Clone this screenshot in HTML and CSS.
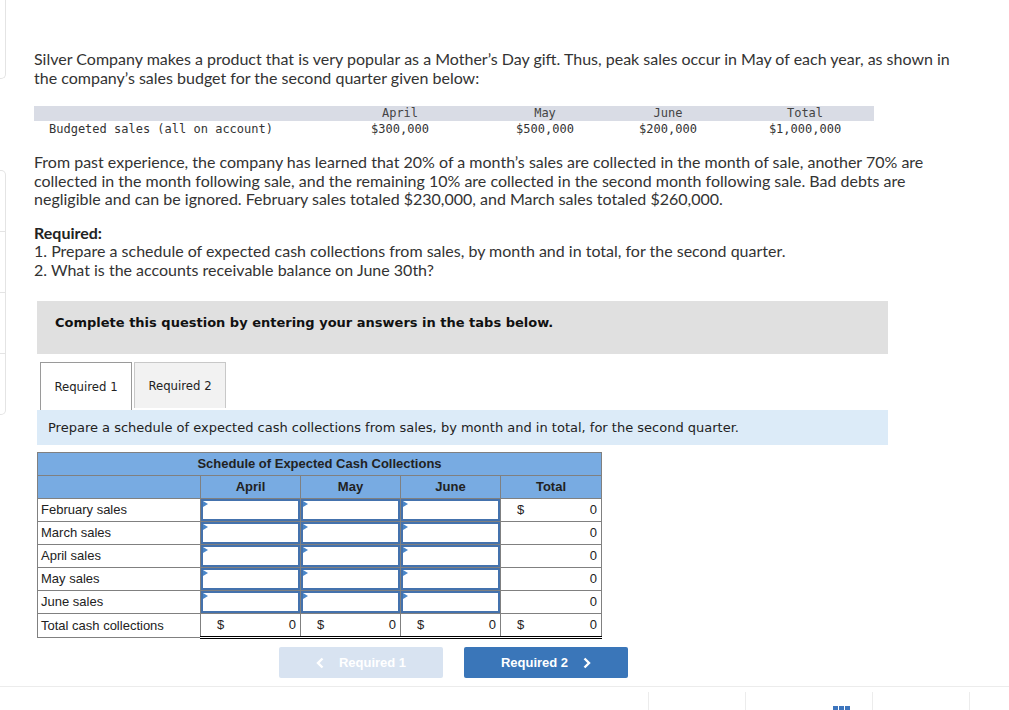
FILE: index.html
```html
<!DOCTYPE html>
<html lang="en">
<head>
<meta charset="utf-8">
<title>Silver Company – Schedule of Expected Cash Collections</title>
<link rel="stylesheet" href="styles.css">
</head>
<body>
<div class="page">
  <aside class="sidebar">
    <div class="sb-top"></div>
    <div class="sb-list">
      <div class="sb-item"></div>
      <div class="sb-item"></div>
      <div class="sb-item"></div>
      <div class="sb-item"></div>
    </div>
  </aside>

  <main class="content">
    <p class="text intro">Silver Company makes a product that is very popular as a Mother’s Day gift. Thus, peak sales occur in May of each year, as shown in the company’s sales budget for the second quarter given below:</p>

    <div class="budget">
      <div class="b-row b-head">
        <div class="b-cell b-label"></div>
        <div class="b-cell">April</div>
        <div class="b-cell">May</div>
        <div class="b-cell">June</div>
        <div class="b-cell b-total">Total</div>
      </div>
      <div class="b-row">
        <div class="b-cell b-label">Budgeted sales (all on account)</div>
        <div class="b-cell">$300,000</div>
        <div class="b-cell">$500,000</div>
        <div class="b-cell">$200,000</div>
        <div class="b-cell b-total">$1,000,000</div>
      </div>
    </div>

    <p class="text past">From past experience, the company has learned that 20% of a month’s sales are collected in the month of sale, another 70% are collected in the month following sale, and the remaining 10% are collected in the second month following sale. Bad debts are negligible and can be ignored. February sales totaled $230,000, and March sales totaled $260,000.</p>

    <div class="text required">
      <strong>Required:</strong><br>
      1. Prepare a schedule of expected cash collections from sales, by month and in total, for the second quarter.<br>
      2. What is the accounts receivable balance on June 30th?
    </div>

    <section class="question">
      <div class="q-banner">Complete this question by entering your answers in the tabs below.</div>

      <div class="tabs">
        <div class="tab active">Required 1</div>
        <div class="tab">Required 2</div>
      </div>

      <div class="instruction">Prepare a schedule of expected cash collections from sales, by month and in total, for the second quarter.</div>

      <table class="schedule">
        <colgroup>
          <col class="c-label"><col class="c-val"><col class="c-val"><col class="c-val"><col class="c-tot">
        </colgroup>
        <thead>
          <tr class="h1"><th colspan="5">Schedule of Expected Cash Collections</th></tr>
          <tr class="h2"><th></th><th>April</th><th>May</th><th>June</th><th>Total</th></tr>
        </thead>
        <tbody>
          <tr>
            <td class="label">February sales</td>
            <td class="in"><div class="box"></div></td>
            <td class="in"><div class="box"></div></td>
            <td class="in"><div class="box"></div></td>
            <td class="num"><span class="cur">$</span><span class="val">0</span></td>
          </tr>
          <tr>
            <td class="label">March sales</td>
            <td class="in"><div class="box"></div></td>
            <td class="in"><div class="box"></div></td>
            <td class="in"><div class="box"></div></td>
            <td class="num"><span class="val">0</span></td>
          </tr>
          <tr>
            <td class="label">April sales</td>
            <td class="in"><div class="box"></div></td>
            <td class="in"><div class="box"></div></td>
            <td class="in"><div class="box"></div></td>
            <td class="num"><span class="val">0</span></td>
          </tr>
          <tr>
            <td class="label">May sales</td>
            <td class="in"><div class="box"></div></td>
            <td class="in"><div class="box"></div></td>
            <td class="in"><div class="box"></div></td>
            <td class="num"><span class="val">0</span></td>
          </tr>
          <tr>
            <td class="label">June sales</td>
            <td class="in"><div class="box"></div></td>
            <td class="in"><div class="box"></div></td>
            <td class="in"><div class="box"></div></td>
            <td class="num"><span class="val">0</span></td>
          </tr>
          <tr class="total">
            <td class="label">Total cash collections</td>
            <td class="num"><span class="cur">$</span><span class="val">0</span></td>
            <td class="num"><span class="cur">$</span><span class="val">0</span></td>
            <td class="num"><span class="cur">$</span><span class="val">0</span></td>
            <td class="num"><span class="cur">$</span><span class="val">0</span></td>
          </tr>
        </tbody>
      </table>

      <div class="nav">
        <button class="btn prev" type="button">
          <svg class="chev" width="8" height="12" viewBox="0 0 8 12" aria-hidden="true"><path d="M6.5 1.5 2 6l4.5 4.5" fill="none" stroke="currentColor" stroke-width="2.4"/></svg>
          <span>Required 1</span>
        </button>
        <button class="btn next" type="button">
          <span>Required 2</span>
          <svg class="chev" width="8" height="12" viewBox="0 0 8 12" aria-hidden="true"><path d="M1.5 1.5 6 6l-4.5 4.5" fill="none" stroke="currentColor" stroke-width="2.4"/></svg>
        </button>
      </div>
    </section>
  </main>
</div>

<footer class="footer">
  <div class="f-cell f-a"></div>
  <div class="f-cell f-b f-icon"><span></span><span></span><span></span></div>
  <div class="f-cell f-c"></div>
  <div class="f-cell f-d"></div>
</footer>
</body>
</html>
```

FILE: styles.css
```css
html, body {
  margin: 0;
  padding: 0;
  background: #fff;
}

body {
  font-family: Lato, "Open Sans", sans-serif;
  color: #333;
  overflow: hidden;
}

.page {
  display: flex;
  align-items: flex-start;
}

/* left side panel (cut off at the window edge) */
.sidebar {
  width: 6px;
  flex: none;
  display: flex;
  flex-direction: column;
}

.sb-top {
  height: 79px;
  border-right: 1px solid #e4e4e4;
  border-bottom: 1px solid #e4e4e4;
  border-bottom-right-radius: 5px;
  box-sizing: border-box;
}

.sb-list {
  margin-top: 91px;
  border: 1px solid #e4e4e4;
  border-left: none;
  border-radius: 0 5px 5px 0;
}

.sb-item {
  height: 60px;
  border-bottom: 1px solid #e4e4e4;
}

.sb-item:last-child {
  border-bottom: none;
}

.content {
  flex: 1;
  padding: 50px 0 0 28px;
}

.text {
  margin: 0;
  font-size: 16px;
  line-height: 18.5px;
  color: #333;
}

.intro {
  width: 928px;
}

/* budget table */
.budget {
  margin-top: 19px;
  width: 840px;
  font-family: "DejaVu Sans Mono", "Liberation Mono", monospace;
  font-size: 12px;
  color: #333;
}

.b-row {
  display: grid;
  grid-template-columns: 295px 142px 148px 98px 157px;
  height: 15px;
  line-height: 15px;
}

.b-head {
  background: #d9dce5;
  color: #444;
}

.b-row + .b-row {
  height: 16px;
  line-height: 16px;
}

.b-cell {
  text-align: center;
  white-space: nowrap;
}

.b-label {
  text-align: left;
  padding-left: 15px;
}

.b-total {
  padding-left: 19px;
}

.past {
  margin-top: 16px;
  width: 928px;
}

.required {
  margin-top: 15px;
}

.required strong {
  font-weight: 700;
  color: #222;
}

/* question block */
.question {
  margin: 22px 0 0 3px;
  width: 851px;
}

.q-banner {
  height: 53px;
  box-sizing: border-box;
  background: #e0e0e0;
  padding: 13px 0 0 18px;
  font-family: "DejaVu Sans", Verdana, sans-serif;
  font-weight: 700;
  font-size: 13px;
  line-height: 18px;
  color: #111;
}

.tabs {
  display: flex;
  align-items: flex-start;
  margin-top: 8px;
  padding-left: 3px;
  gap: 2px;
  height: 48px;
}

.tab {
  width: 92px;
  height: 46px;
  box-sizing: border-box;
  border: 1px solid #c8c8c8;
  border-bottom: none;
  background: #f2f2f2;
  font-family: "DejaVu Sans", Verdana, sans-serif;
  font-size: 11.7px;
  color: #222;
  text-align: center;
  line-height: 46px;
}

.tab.active {
  height: 48px;
  background: #fff;
  border-color: #9a9a9a;
  line-height: 48px;
}

.instruction {
  height: 35px;
  box-sizing: border-box;
  background: #dcebf8;
  padding: 0 0 0 11px;
  font-family: "DejaVu Sans", Verdana, sans-serif;
  font-size: 13px;
  line-height: 36px;
  color: #222;
  white-space: nowrap;
}

/* schedule table */
.schedule {
  margin-top: 7px;
  border-collapse: collapse;
  table-layout: fixed;
  width: 564px;
  font-family: "Liberation Sans", Arial, sans-serif;
  font-size: 13px;
  color: #222;
  border: 1px solid #808080;
}

.c-label { width: 163px; }
.c-val { width: 100px; }
.c-tot { width: 101px; }

.schedule th {
  background: #78abe2;
  font-weight: 700;
  height: 22px;
  padding: 0;
  border: 1px solid #808080;
  color: #222;
  line-height: 22px;
}

.schedule td {
  height: 22px;
  padding: 0;
  border: 1px solid #808080;
  line-height: 22px;
}

.schedule td.label {
  padding-left: 3px;
  white-space: nowrap;
}

.box {
  position: relative;
  height: 22px;
  box-sizing: border-box;
  border: 2px solid #4472ad;
  background: #fff;
}

.box::before {
  content: "";
  position: absolute;
  left: 0;
  top: 0;
  border-left: 5px solid #4a86c8;
  border-top: 3px solid transparent;
  border-bottom: 3px solid transparent;
}

.schedule td.num {
  padding: 0 4px 0 16px;
}

.num .cur {
  float: left;
}

.num .val {
  float: right;
}

.schedule tr.total td {
  border-top: 1px solid #000;
}

.schedule tr.total td.num {
  border-bottom: 3px double #000;
}

.schedule tr.total td.label {
  border-top: 1px solid #808080;
}

/* nav buttons */
.nav {
  display: flex;
  gap: 21px;
  margin: 8px 0 0 242px;
}

.btn {
  width: 164px;
  height: 31px;
  border: none;
  border-radius: 2px;
  font-family: "Liberation Sans", Arial, sans-serif;
  font-weight: 700;
  font-size: 13px;
  color: #fff;
  padding: 0;
  display: flex;
  align-items: center;
  justify-content: center;
  gap: 15px;
  cursor: pointer;
}

.btn.prev {
  background: #d8e3f1;
}

.btn.next {
  background: #3a76b9;
}

/* footer strip */
.footer {
  margin-top: 8px;
  border-top: 1px solid #ececec;
  display: flex;
  padding: 5px 0 0 648px;
  height: 30px;
}

.f-cell {
  border-left: 1px solid #ececec;
  height: 30px;
  flex: none;
  box-sizing: border-box;
}

.f-a { width: 97px; }
.f-b { width: 127px; }
.f-c { width: 97px; }
.f-d { width: 40px; }

.f-icon {
  display: flex;
  gap: 1px;
  padding: 14px 0 0 87px;
}

.f-icon span {
  flex: none;
  width: 5px;
  height: 5px;
  background: #3d75bd;
}
```
